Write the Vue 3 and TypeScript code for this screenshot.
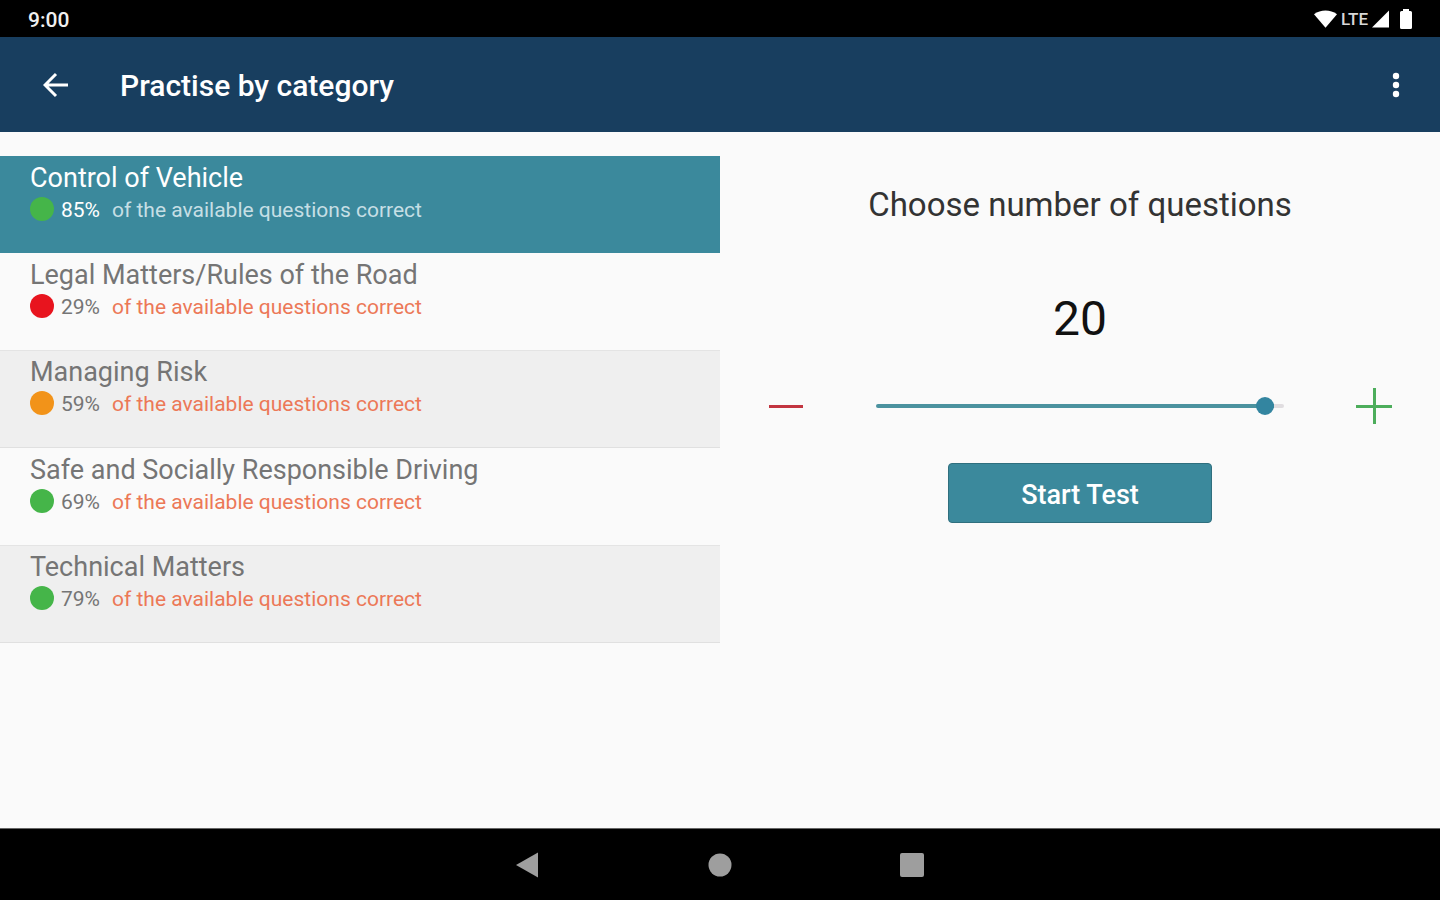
<script setup lang="ts">
import { computed, ref } from 'vue'

interface Category {
  name: string
  percent: number
  tone: 'good' | 'fair' | 'poor'
}

const categories: Category[] = [
  { name: 'Control of Vehicle', percent: 85, tone: 'good' },
  { name: 'Legal Matters/Rules of the Road', percent: 29, tone: 'poor' },
  { name: 'Managing Risk', percent: 59, tone: 'fair' },
  { name: 'Safe and Socially Responsible Driving', percent: 69, tone: 'good' },
  { name: 'Technical Matters', percent: 79, tone: 'good' },
]

const selected = ref(0)
const count = ref(20)
const min = 1
const max = 20.5

const fill = computed(() => `${((count.value - min) / (max - min)) * 100}%`)

function change(step: number) {
  count.value = Math.min(Math.floor(max), Math.max(min, count.value + step))
}
</script>

<template>
  <div class="screen">
    <div class="status-bar">
      <span class="clock">9:00</span>
      <div class="status-icons">
        <svg class="wifi" viewBox="0 0 24 18" aria-hidden="true">
          <path d="M0 4C7-1 17-1 24 4L12 18Z" />
        </svg>
        <span class="network">LTE</span>
        <svg class="signal" viewBox="0 0 18 18" aria-hidden="true"><path d="M0 18L18 0V18Z" /></svg>
        <svg class="battery" viewBox="0 0 12 20" aria-hidden="true">
          <path d="M3 2V0H9V2H10.500Q12 2 12 3.500V18.500Q12 20 10.500 20H1.500Q0 20 0 18.500V3.500Q0 2 1.500 2Z" />
        </svg>
      </div>
    </div>

    <header class="app-bar">
      <button class="icon-button" type="button" aria-label="Back">
        <svg class="back" viewBox="0 0 26 26" aria-hidden="true">
          <path d="M25 13H2M13 2L2 13L13 24" />
        </svg>
      </button>
      <h1>Practise by category</h1>
      <button class="icon-button menu" type="button" aria-label="More options">
        <svg class="dots" viewBox="0 0 8 26" aria-hidden="true">
          <circle cx="4" cy="4" r="3.200" />
          <circle cx="4" cy="13" r="3.200" />
          <circle cx="4" cy="22" r="3.200" />
        </svg>
      </button>
    </header>

    <main>
      <ul class="categories">
        <li v-for="(category, index) in categories" :key="category.name">
          <button
            class="category"
            :class="{ selected: index === selected }"
            type="button"
            :aria-pressed="index === selected"
            @click="selected = index"
          >
            <span class="name">{{ category.name }}</span>
            <span class="score">
              <span class="dot" :class="category.tone"></span>
              <span class="percent">{{ category.percent }}%</span>
              <span class="caption">of the available questions correct</span>
            </span>
          </button>
        </li>
      </ul>

      <section class="chooser">
        <label class="heading" for="question-count">Choose number of questions</label>
        <output class="count" for="question-count">{{ count }}</output>
        <div class="slider-row">
          <button class="step minus" type="button" aria-label="Fewer questions" @click="change(-1)">
            <svg viewBox="0 0 36 36" aria-hidden="true"><path d="M1 18.500H35" /></svg>
          </button>
          <input
            id="question-count"
            v-model.number="count"
            class="slider"
            type="range"
            :min="min"
            :max="max"
            step="1"
            :style="{ '--fill': fill }"
          />
          <button class="step plus" type="button" aria-label="More questions" @click="change(1)">
            <svg viewBox="0 0 36 36" aria-hidden="true"><path d="M0 18.500H36M18.500 0V36" /></svg>
          </button>
        </div>
        <button class="start" type="button">Start Test</button>
      </section>
    </main>

    <nav class="nav-bar" aria-label="System">
      <button type="button" aria-label="Back">
        <svg viewBox="0 0 24 26" aria-hidden="true"><path d="M0 13L22 0.500V25.500Z" /></svg>
      </button>
      <button type="button" aria-label="Home">
        <svg viewBox="0 0 24 26" aria-hidden="true"><circle cx="12" cy="13" r="11.500" /></svg>
      </button>
      <button type="button" aria-label="Recent apps">
        <svg viewBox="0 0 24 26" aria-hidden="true"><rect y="1" width="24" height="24" rx="2" /></svg>
      </button>
    </nav>
  </div>
</template>

<style>
body {
  margin: 0;
}
</style>

<style scoped>
.screen {
  display: flex;
  flex-direction: column;
  min-height: 100vh;
  background: #fafafa;
  font-family: Roboto, 'Liberation Sans', sans-serif;
}

button {
  padding: 0;
  border: 0;
  background: none;
  font: inherit;
  color: inherit;
  cursor: pointer;
}

svg {
  display: block;
}

.status-bar {
  display: flex;
  align-items: center;
  justify-content: space-between;
  height: 37px;
  padding: 0 28px;
  box-sizing: border-box;
  background: #000;
  color: #f0f0f0;
}

.clock {
  padding-top: 2px;
  font-size: 21px;
  font-weight: 500;
}

.status-icons {
  display: flex;
  align-items: center;
  gap: 4px;
  fill: #fff;
}

.wifi {
  width: 23px;
  height: 18px;
}

.network {
  font-size: 17px;
  font-weight: 500;
  color: #d8d8d8;
}

.signal {
  width: 17px;
  height: 18px;
}

.battery {
  width: 12px;
  height: 20px;
  margin-left: 7px;
}

.app-bar {
  display: flex;
  align-items: center;
  height: 95px;
  padding: 0 40px;
  background: #183e5f;
  color: #fff;
}

.icon-button {
  display: flex;
  align-items: center;
  justify-content: center;
  width: 32px;
  height: 48px;
}

.back {
  width: 26px;
  height: 26px;
  fill: none;
  stroke: #fff;
  stroke-width: 3;
}

h1 {
  margin: 0 0 0 48px;
  padding-top: 3px;
  font-size: 30px;
  font-weight: 500;
  line-height: 36px;
}

.menu {
  width: 8px;
  margin-left: auto;
}

.dots {
  width: 8px;
  height: 26px;
  fill: #fff;
}

main {
  flex: 1;
  display: grid;
  grid-template-columns: 1fr 1fr;
  align-items: start;
  padding: 24px 0;
}

.categories {
  margin: 0;
  padding: 0;
  list-style: none;
}

.category {
  display: block;
  width: 100%;
  min-height: 97px;
  padding: 5px 30px 29px;
  text-align: left;
  color: #757575;
}

li:nth-child(odd) .category:not(.selected) {
  border-top: 1px solid #e4e4e4;
  border-bottom: 1px solid #e0e0e0;
  background: #efefef;
}

.category.selected {
  background: #3b899c;
  color: #fff;
}

.name {
  display: block;
  font-size: 27px;
  line-height: 32px;
}

.score {
  display: flex;
  align-items: center;
  font-size: 21px;
  line-height: 28px;
}

.dot {
  width: 24px;
  height: 24px;
  margin-right: 7px;
  border-radius: 50%;
}

.good {
  background: #45b549;
}

.fair {
  background: #f29319;
}

.poor {
  background: #e8141e;
}

.percent,
.caption {
  padding-top: 2px;
}

.percent {
  width: 51px;
}

.caption {
  color: #ec7857;
}

.selected .caption {
  color: #c6dfe5;
}

.chooser {
  display: flex;
  flex-direction: column;
  align-items: center;
  padding: 29px 48px;
}

.heading {
  font-size: 33px;
  line-height: 40px;
  color: #333;
}

.count {
  margin-top: 66px;
  font-size: 48px;
  line-height: 56px;
  color: #111;
}

.slider-row {
  display: flex;
  align-items: center;
  gap: 72px;
  width: 100%;
  margin-top: 41px;
}

.step svg {
  width: 36px;
  height: 36px;
  fill: none;
  stroke-width: 3;
}

.minus {
  stroke: #c23540;
}

.plus {
  stroke: #4cad5b;
}

.slider {
  flex: 1;
  min-width: 0;
  height: 20px;
  margin: 0;
  appearance: none;
  background: none;
}

.slider::-webkit-slider-runnable-track {
  height: 4px;
  border-radius: 2px;
  background: linear-gradient(to right, #4b929f var(--fill), #e0dde0 var(--fill));
}

.slider::-webkit-slider-thumb {
  appearance: none;
  width: 18px;
  height: 18px;
  margin-top: -7px;
  border-radius: 50%;
  background: #3385a0;
}

.start {
  width: 264px;
  height: 60px;
  margin-top: 39px;
  padding-top: 3px;
  border: 1px solid #2f6f7e;
  border-radius: 4px;
  background: #3b899c;
  font-size: 27px;
  font-weight: 500;
  color: #fff;
}

.nav-bar {
  display: flex;
  align-items: center;
  justify-content: center;
  gap: 168px;
  height: 71px;
  border-top: 1px solid #666;
  background: #000;
}

.nav-bar svg {
  width: 24px;
  height: 26px;
  fill: #9e9e9e;
}
</style>
